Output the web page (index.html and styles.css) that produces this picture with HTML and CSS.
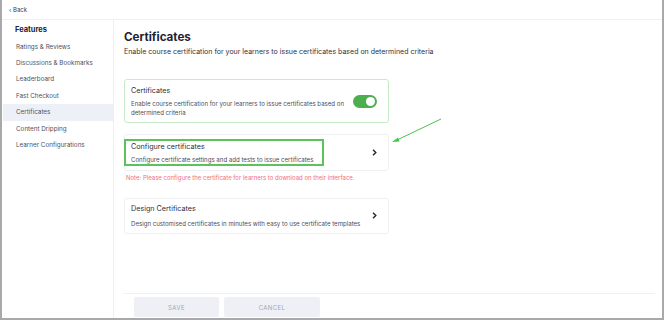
FILE: index.html
```html
<!DOCTYPE html>
<html>
<head>
    <title>Certificates</title>
    <link rel="stylesheet" href="styles.css">
</head>
<body>
    <div class="frame">
        <div class="topbar">
            <a class="back" href="#">&lsaquo; Back</a>
        </div>
        <div class="layout">
            <aside class="sidebar">
                <div class="sidebar-title">Features</div>
                <div class="nav-item">Ratings &amp; Reviews</div>
                <div class="nav-item">Discussions &amp; Bookmarks</div>
                <div class="nav-item">Leaderboard</div>
                <div class="nav-item">Fast Checkout</div>
                <div class="nav-item active">Certificates</div>
                <div class="nav-item">Content Dripping</div>
                <div class="nav-item">Learner Configurations</div>
            </aside>
            <main class="main">
                <div class="content">
                    <h1 class="page-title">Certificates</h1>
                    <p class="lead">Enable course certification for your learners to issue certificates based on determined criteria</p>

                    <div class="card card-toggle">
                        <div class="card-text">
                            <div class="card-title">Certificates</div>
                            <div class="card-desc">Enable course certification for your learners to issue certificates based on determined criteria</div>
                        </div>
                        <div class="switch on"><span class="knob"></span></div>
                    </div>

                    <div class="card card-link card-configure">
                        <div class="card-text highlight">
                            <div class="card-title">Configure certificates</div>
                            <div class="card-desc">Configure certificate settings and add tests to issue certificates</div>
                        </div>
                        <svg class="chevron" width="5" height="7" viewBox="0 0 5 7">
                            <path d="M1 0.8 L3.8 3.5 L1 6.2" fill="none" stroke="#222533" stroke-width="1.4"/>
                        </svg>
                    </div>
                    <p class="note">Note: Please configure the certificate for learners to download on their interface.</p>

                    <div class="card card-link card-design">
                        <div class="card-text">
                            <div class="card-title">Design Certificates</div>
                            <div class="card-desc">Design customised certificates in minutes with easy to use certificate templates</div>
                        </div>
                        <svg class="chevron" width="5" height="7" viewBox="0 0 5 7">
                            <path d="M1 0.8 L3.8 3.5 L1 6.2" fill="none" stroke="#222533" stroke-width="1.4"/>
                        </svg>
                    </div>
                </div>
                <div class="footer">
                    <button class="btn btn-save">SAVE</button>
                    <button class="btn btn-cancel">CANCEL</button>
                </div>
            </main>
        </div>
        <svg class="arrow" width="60" height="30" viewBox="0 0 60 30">
            <line x1="49" y1="1" x2="5" y2="22" stroke="#4cc24c" stroke-width="1"/>
            <polygon points="0,24 6,19.5 7.5,23.5" fill="#4cc24c"/>
        </svg>
    </div>
</body>
</html>
```

FILE: styles.css
```css
* {
    box-sizing: border-box;
}
body {
    margin: 0;
    background: #fff;
    font-family: Inter, "Noto Sans", sans-serif;
    color: #2a2d3d;
}
.frame {
    position: relative;
    width: 664px;
    height: 320px;
    border: 2px solid #a9a9a9;
    border-top: none;
    background: #fff;
}
.topbar {
    height: 20px;
    border-bottom: 1px solid #f0f0f2;
    padding: 5px 0 0 7px;
}
.back {
    display: block;
    font-size: 6px;
    line-height: 10px;
    color: #3a3d4a;
    text-decoration: none;
}
.layout {
    display: flex;
    height: 298px;
}
.sidebar {
    width: 112px;
    border-right: 1px solid #eeeff2;
    padding-top: 4px;
}
.sidebar-title {
    font-size: 7.5px;
    font-weight: 700;
    line-height: 12px;
    padding-left: 13px;
    margin-bottom: 2.5px;
    color: #22253a;
}
.nav-item {
    font-size: 6.3px;
    line-height: 16.4px;
    padding-left: 13px;
    margin-left: 1px;
    color: #4e5160;
}
.nav-item.active {
    background: #eef0f7;
}
.main {
    flex: 1;
    display: flex;
    flex-direction: column;
}
.content {
    flex: 1;
    padding: 10px 0 0 10px;
}
.page-title {
    margin: 0;
    font-size: 11.6px;
    line-height: 14px;
    font-weight: 700;
    color: #1f2233;
}
.lead {
    margin: 3px 0 22px;
    font-size: 7px;
    line-height: 10px;
    color: #2f3242;
}
.card {
    width: 265px;
    border: 1px solid #eeeff1;
    border-radius: 3px;
    display: flex;
    align-items: center;
    justify-content: space-between;
}
.card-title {
    font-size: 7.2px;
    line-height: 10px;
    color: #2c2f3e;
}
.card-desc {
    font-size: 6.1px;
    line-height: 9px;
    color: #4a4d5c;
}
.card-toggle {
    border-color: #c7ebc7;
    padding: 6px 11px 5.5px 6px;
}
.card-toggle .card-text {
    width: 220px;
}
.card-toggle .card-desc {
    margin-top: 2.5px;
}
.switch {
    width: 24px;
    height: 13px;
    border-radius: 7px;
    background: #4cae4f;
    position: relative;
    flex-shrink: 0;
}
.switch .knob {
    position: absolute;
    top: 2px;
    right: 2px;
    width: 9px;
    height: 9px;
    border-radius: 50%;
    background: #fff;
}
.card-link {
    padding: 4px 11px 4px 0;
}
.card-configure {
    margin-top: 11px;
}
.card-link .chevron {
    flex-shrink: 0;
}
.highlight {
    margin-left: -1px;
    width: 200px;
    border: 2px solid #5cc25c;
    padding: 1px 5px 0.5px;
}
.highlight .card-desc {
    margin-top: 2.5px;
}
.note {
    margin: 1.5px 0 16.5px 2px;
    font-size: 6px;
    line-height: 9px;
    color: #f26d7d;
}
.card-design {
    padding: 5px 11px 5.5px 6px;
}
.card-design .card-desc {
    margin-top: 4.5px;
}
.footer {
    margin: 0 7px 1px 9px;
    border-top: 1px solid #f0f1f3;
    padding: 3px 0 0 11px;
    display: flex;
    gap: 5px;
}
.btn {
    height: 20px;
    border: none;
    border-radius: 2px;
    background: #eef0f6;
    color: #a3a7b3;
    font-family: Inter, "Noto Sans", sans-serif;
    font-size: 6px;
    letter-spacing: 0.4px;
}
.btn-save {
    width: 85px;
}
.btn-cancel {
    width: 96px;
}
.arrow {
    position: absolute;
    left: 390px;
    top: 118px;
}
```
